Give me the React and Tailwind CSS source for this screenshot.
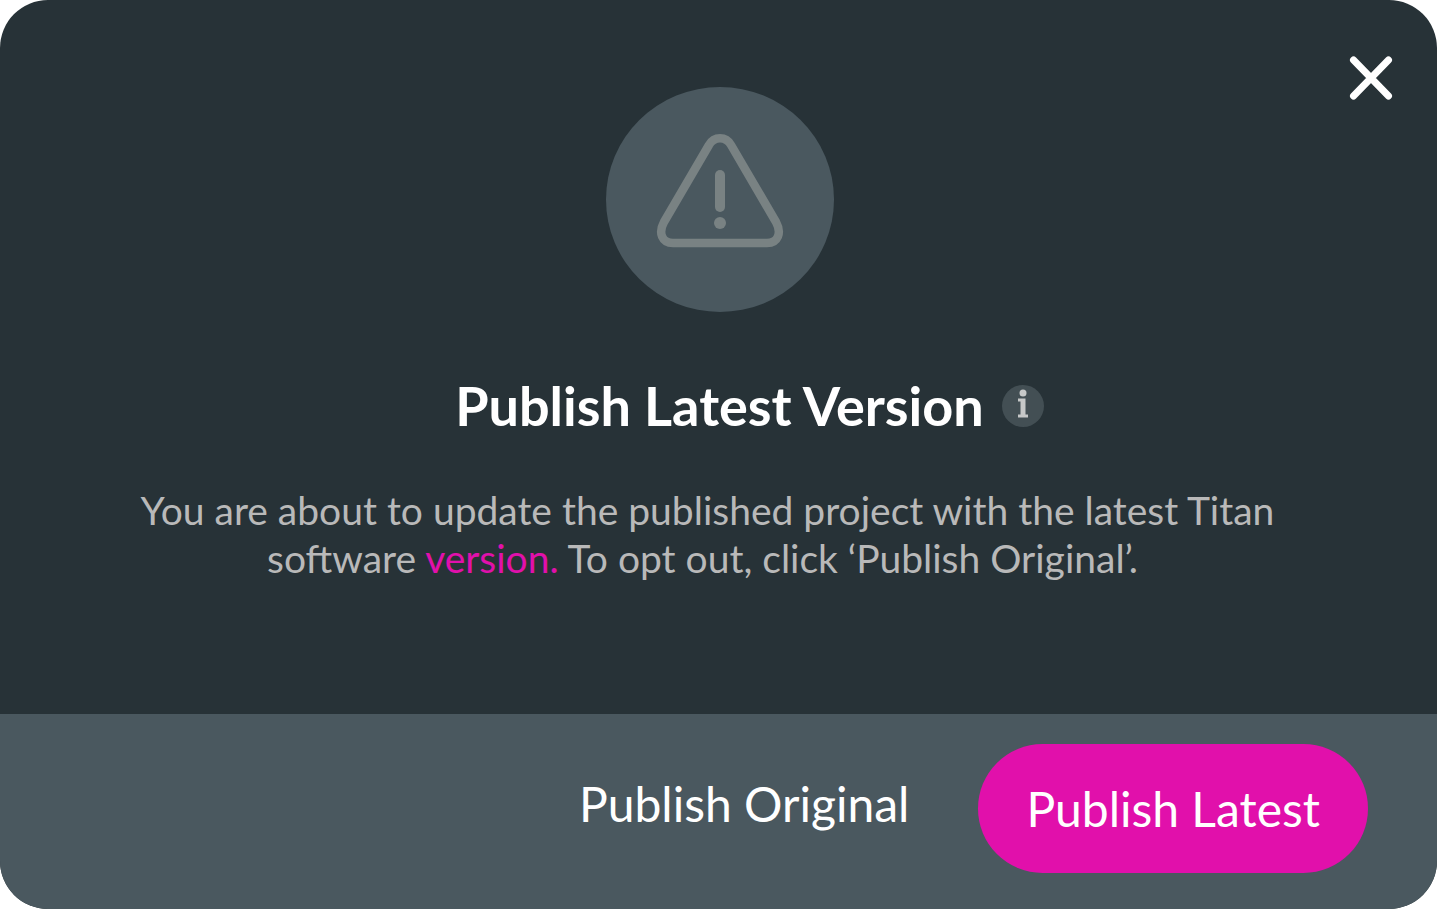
// Round warning badge at the top of the dialog
const WarningIcon = () => (
  <svg viewBox="0 0 228 225" className="w-[228px] h-[225px]" fill="none" aria-hidden="true">
    <ellipse cx="114" cy="112.500" rx="114" ry="112.500" fill="#4a585f" />
    <g stroke="#798283" strokeWidth="8.500" strokeLinejoin="round">
      <path d="M103 58C108 49 120 49 125 58L170 135C176 146 172 156 161 156H67C56 156 52 146 58 135Z" />
      <path d="M114 88V120" strokeWidth="10" strokeLinecap="round" />
    </g>
    <circle cx="114" cy="136" r="6" fill="#798283" />
  </svg>
);

const CloseIcon = () => (
  <svg viewBox="0 0 46 48" className="w-[46px] h-[48px]" fill="none" aria-hidden="true">
    <path d="M5.500 6L40.500 42M40.500 6L5.500 42" stroke="#ffffff" strokeWidth="7" strokeLinecap="round" />
  </svg>
);

const InfoIcon = () => (
  <svg viewBox="0 0 42 42" className="w-[42px] h-[42px]" aria-hidden="true">
    <circle cx="21" cy="21" r="21" fill="#434f54" />
    <circle cx="21" cy="8" r="3.500" fill="#c6c8c8" />
    <path d="M16 13.500H23.500V29.500H26V32.500H16V29.500H18.500V16.500H16Z" fill="#c6c8c8" />
  </svg>
);

const App = () => {
  return (
    <div
      role="dialog"
      aria-labelledby="dialog-title"
      className="relative flex min-h-screen flex-col overflow-hidden rounded-[48px] bg-[#273237] font-['Lato',sans-serif]"
    >
      {/* Close button */}
      <button aria-label="Close" className="absolute right-[43px] top-[54px] cursor-pointer">
        <CloseIcon />
      </button>

      {/* Dialog body */}
      <div className="flex flex-1 flex-col items-center pt-[87px] pr-16 pl-[66px]">
        <WarningIcon />

        <div className="mt-[62px] grid w-full grid-cols-[1fr_auto_1fr] items-center gap-[18px]">
          <h1
            id="dialog-title"
            className="col-start-2 text-[54px] leading-[64px] font-bold text-white"
          >
            Publish Latest Version
          </h1>
          <button aria-label="More information" className="w-[42px] cursor-pointer">
            <InfoIcon />
          </button>
        </div>

        <p className="mt-12 mr-6 max-w-[1180px] text-center text-[39px] leading-[48px] text-[#b9b9b9]">
          You are about to update the published project with the latest Titan software{" "}
          <a href="#version" className="text-[#e110ab]">
            version.
          </a>{" "}
          To opt out, click ‘Publish Original’.&nbsp;
        </p>
      </div>

      {/* Actions */}
      <div className="flex items-start justify-end gap-[69px] bg-[#4a585f] px-[69px] pt-[30px] pb-9 text-[48px] text-white">
        <button className="h-[120px] cursor-pointer">Publish Original</button>
        <button className="h-[129px] cursor-pointer rounded-full bg-[#e110ab] px-12">
          Publish Latest
        </button>
      </div>
    </div>
  );
};

export default App;
